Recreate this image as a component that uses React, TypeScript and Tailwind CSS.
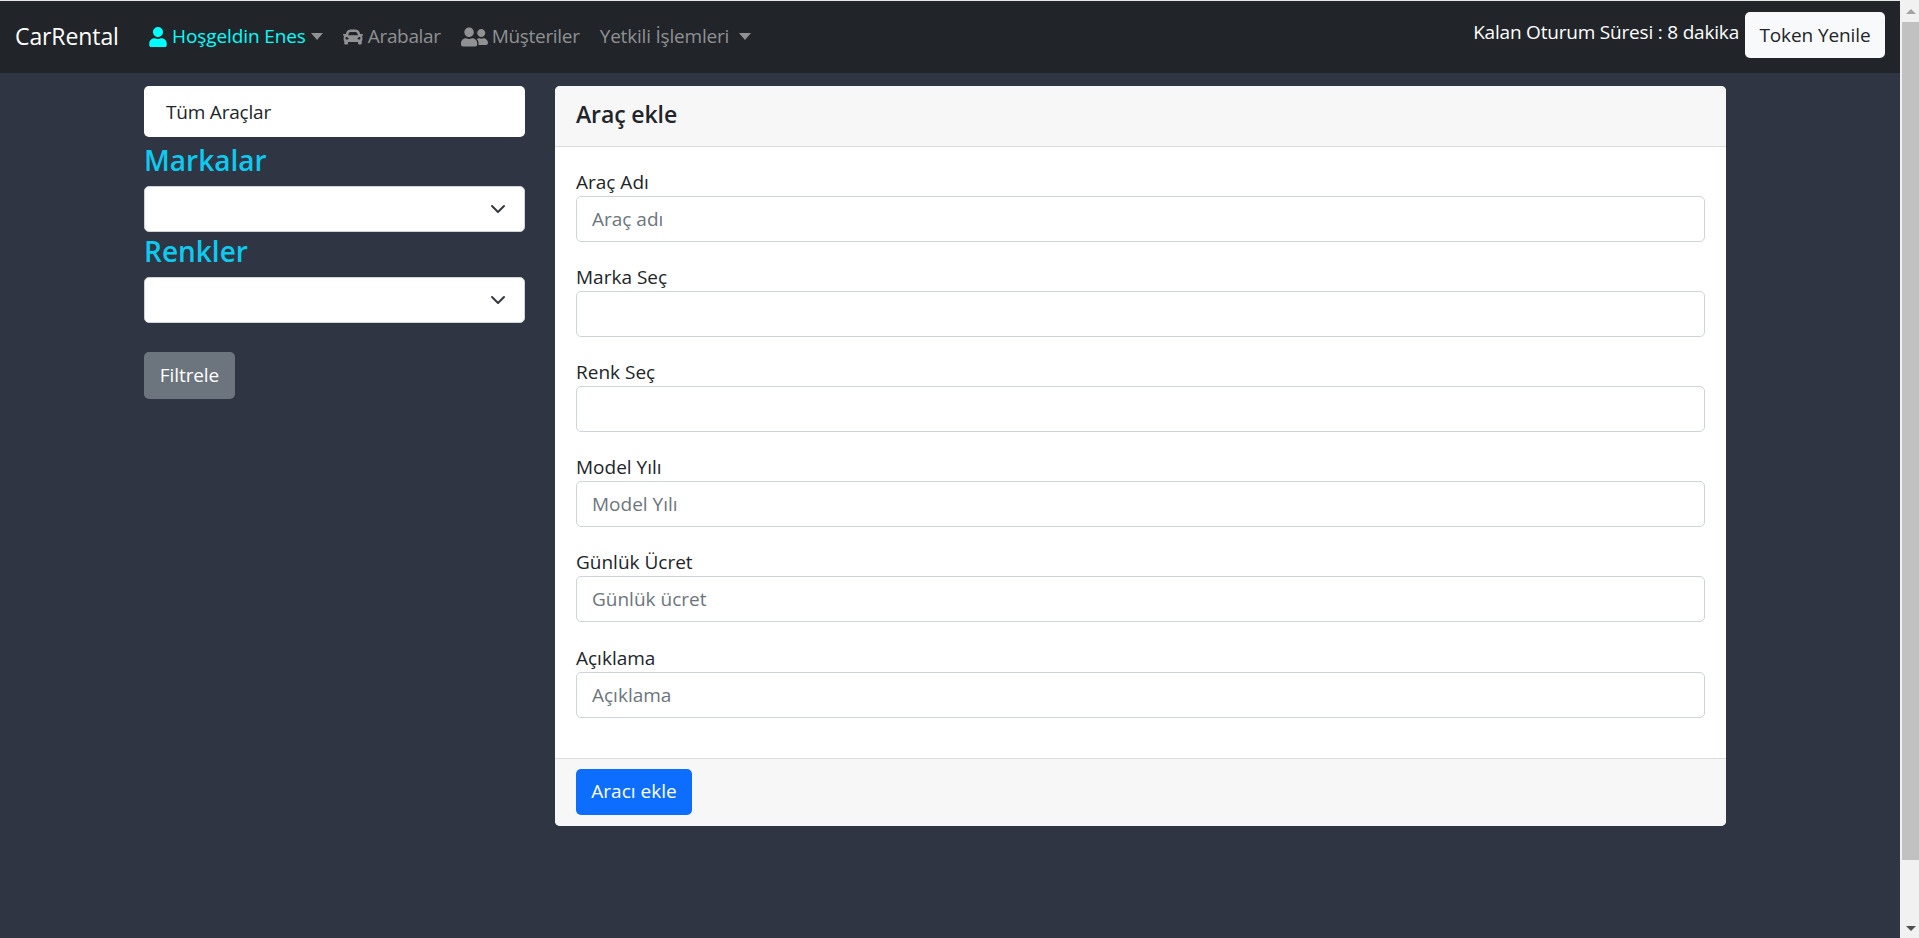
import { FaUser, FaCar, FaUserFriends } from "react-icons/fa";

const font = "font-['Open_Sans','Noto_Sans',sans-serif]";

function Caret({ cls }: { cls: string }) {
  return <span className={`inline-block w-0 h-0 border-x-[6px] border-x-transparent border-t-[7px] ${cls}`} />;
}

function Chevron() {
  return (
    <svg width="16" height="12" viewBox="0 0 16 12" fill="none" stroke="#343a40" strokeWidth="2" strokeLinecap="round" strokeLinejoin="round">
      <path d="M2 3l6 6 6-6" />
    </svg>
  );
}

function Field({ label, placeholder, extra }: { label: string; placeholder?: string; extra?: string }) {
  return (
    <div className={`mb-[21px] flex flex-col ${extra ?? ""}`}>
      <label className="h-[28px] text-[19px] leading-[28px] text-[#212529]">{label}</label>
      <input
        placeholder={placeholder}
        className="h-[46px] w-full rounded-[5px] border border-[#ced4da] bg-white px-[15px] text-[19px] outline-none placeholder:text-[#6c757d]"
      />
    </div>
  );
}

function Select() {
  return (
    <div className="flex h-[46px] items-center justify-end rounded-[5px] border border-[#ced4da] bg-white pr-[18px]">
      <Chevron />
    </div>
  );
}

export default function App() {
  return (
    <div className={`flex h-[938px] overflow-hidden bg-[#2f3542] ${font}`}>
      <div className="flex min-w-0 flex-1 flex-col">
        <div className="h-px bg-[#e8e8e8]" />
        <nav className="flex h-[72px] items-center justify-between bg-[#212529] pl-[15px] pr-[15px]">
          <div className="flex items-center pb-[1px]">
            <span className="mr-[30px] w-[104px] text-[23px] tracking-[-0.1px] text-white">CarRental</span>
            <span className="flex items-center gap-[5px] text-[19px] tracking-[-0.1px] text-[#0ff]">
              <FaUser className="h-[20px] w-[18px]" />
              Hoşgeldin Enes
              <Caret cls="border-t-[#8f9193]" />
            </span>
            <span className="ml-[20px] flex items-center gap-[5px] text-[19px] tracking-[-0.35px] text-[#8f9193]">
              <FaCar className="h-[20px] w-[20px]" />
              Arabalar
            </span>
            <span className="ml-[20px] flex items-center gap-[4px] text-[19px] tracking-[-0.3px] text-[#8f9193]">
              <FaUserFriends className="h-[22px] w-[27px]" />
              Müşteriler
            </span>
            <span className="ml-[20px] flex items-center gap-[10px] text-[19px] tracking-[-0.2px] text-[#8f9193]">
              Yetkili İşlemleri
              <Caret cls="border-t-[#8f9193]" />
            </span>
          </div>
          <div className="mb-[4px] flex items-center gap-[6px]">
            <span className="mb-[5px] text-[19px] tracking-[-0.2px] text-white">Kalan Oturum Süresi : 8 dakika</span>
            <button className="h-[46px] w-[140px] rounded-[5px] bg-[#f8f9fa] text-[19px] tracking-[-0.1px] text-[#212529]">Token Yenile</button>
          </div>
        </nav>
        <main className="flex items-start gap-[30px] pl-[144px] pt-[13px]">
          <aside className="flex w-[381px] flex-col">
            <div className="flex h-[51px] items-center rounded-[5px] bg-white px-[22px] pt-[1px] text-[19px] tracking-[-0.2px] text-[#212529]">Tüm Araçlar</div>
            <h5 className="h-[49px] text-[28px] font-semibold leading-[46px] text-[#0dcaf0]">Markalar</h5>
            <Select />
            <h5 className="h-[45px] text-[28px] font-semibold leading-[38px] text-[#0dcaf0]">Renkler</h5>
            <Select />
            <button className="mt-[29px] h-[47px] w-[91px] rounded-[5px] bg-[#6c757d] text-[19px] tracking-[-0.1px] text-white">Filtrele</button>
          </aside>
          <section className="flex w-[1171px] flex-col overflow-hidden rounded-[5px] bg-white">
            <header className="flex h-[61px] items-center border-b border-[#dcdcdc] bg-[#f7f7f7] px-[21px] pb-[4px] text-[23px] font-semibold tracking-[-0.1px] text-[#212529]">Araç ekle</header>
            <div className="px-[21px] pt-[21px]">
              <Field label="Araç Adı" placeholder="Araç adı" />
              <Field label="Marka Seç" />
              <Field label="Renk Seç" />
              <Field label="Model Yılı" placeholder="Model Yılı" />
              <Field label="Günlük Ücret" placeholder="Günlük ücret" />
              <Field label="Açıklama" placeholder="Açıklama" extra="mt-[22px]" />
            </div>
            <footer className="mt-[19px] flex h-[68px] items-center border-t border-[#dcdcdc] bg-[#f7f7f7] px-[21px] pb-[2px]">
              <button className="h-[46px] w-[116px] rounded-[5px] bg-[#0d6efd] text-[19px] text-white">Aracı ekle</button>
            </footer>
          </section>
        </main>
      </div>
      <div className="flex w-[19px] flex-col bg-[#f1f1f1] pl-[2px]">
        <div className="flex h-[22px] items-center justify-center"><span className="h-0 w-0 border-x-[5px] border-b-[5px] border-x-transparent border-b-[#a3a3a3]" /></div>
        <div className="h-[838px] bg-[#c1c1c1]" />
        <div className="flex-1" />
        <div className="flex h-[20px] items-center justify-center"><span className="h-0 w-0 border-x-[5px] border-t-[5px] border-x-transparent border-t-[#505050]" /></div>
      </div>
    </div>
  );
}
